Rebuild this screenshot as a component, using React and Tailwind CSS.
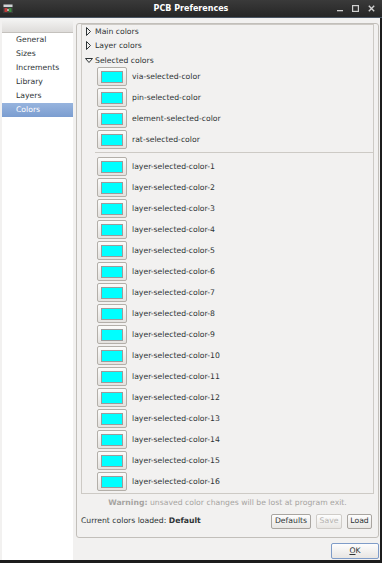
import React from "react";

const selected = [
  "via-selected-color",
  "pin-selected-color",
  "element-selected-color",
  "rat-selected-color",
];
const layers = Array.from({ length: 16 }, (_, i) => `layer-selected-color-${i + 1}`);

function Swatch({ label }) {
  return (
    <div className="h-[21px] flex items-center shrink-0">
      <div className="ml-[15px] w-[30px] h-[19px] rounded-[2px] border border-[#b3afa9] bg-gradient-to-b from-[#fbfbfa] to-[#e4e2df] flex items-center justify-center">
        <div className="w-[22px] h-[12px] border border-[#9b9b9b] bg-[#00ffff]" />
      </div>
      <span className="ml-[5px]">{label}</span>
    </div>
  );
}

function Tri({ open }) {
  return open ? (
    <svg width="8" height="7" viewBox="0 0 8 7" className="shrink-0">
      <path d="M0.5 1.5 L7.5 1.5 L4 5.5 Z" fill="none" stroke="#2e3436" strokeWidth="1" />
    </svg>
  ) : (
    <svg width="7" height="9" viewBox="0 0 7 9" className="shrink-0">
      <path d="M1.5 0.5 L5.5 4.5 L1.5 8.5 Z" fill="none" stroke="#2e3436" strokeWidth="1" />
    </svg>
  );
}

function Header({ label, open, h }) {
  return (
    <div className={`flex items-center shrink-0 ${h}`}>
      <div className="w-[13px] pl-[3px] flex items-center">
        <Tri open={open} />
      </div>
      <span>{label}</span>
    </div>
  );
}

function Btn({ children, disabled, className = "" }) {
  return (
    <div
      className={`h-[15px] px-[3px] flex items-center justify-center rounded-[2px] border bg-gradient-to-b from-[#fdfdfd] to-[#e8e6e3] ${
        disabled ? "border-[#cfccc8] text-[#b5b3b0]" : "border-[#a9a5a0] text-[#2e3436]"
      } ${className}`}
    >
      {children}
    </div>
  );
}

export default function App() {
  const nav = ["General", "Sizes", "Increments", "Library", "Layers", "Colors"];
  return (
    <div
      className="w-[382px] h-[563px] flex flex-col bg-[#1c1c1c] text-[7.7px] text-[#2e3436] leading-none overflow-hidden"
      style={{ fontFamily: '"DejaVu Sans", sans-serif' }}
    >
      {/* Title bar */}
      <div className="h-[18px] shrink-0 flex items-center bg-gradient-to-b from-[#3a3a3a] to-[#262626] border-b border-[#4a5664] relative">
        <div className="pl-[3px] flex items-center">
          <svg width="10" height="9" viewBox="0 0 10 9">
            <rect x="0" y="0" width="10" height="9" fill="#3c3c3c" />
            <rect x="0.5" y="0.5" width="9" height="2.5" fill="#cfd3d6" />
            <rect x="1.5" y="4" width="3" height="4" fill="#c23b3b" />
            <rect x="5.5" y="4" width="3" height="4" fill="#3a8a3e" />
            <rect x="4.3" y="5" width="1.4" height="2" fill="#d8d8d8" />
          </svg>
        </div>
        <div className="absolute inset-0 flex items-center justify-center text-white font-bold text-[8px]">
          PCB Preferences
        </div>
        <div className="ml-auto flex items-center gap-[9px] pr-[7px] text-[#d4d4d4]">
          <svg width="6" height="7" viewBox="0 0 6 7">
            <rect x="0" y="5" width="6" height="1.3" fill="#d0d0d0" />
          </svg>
          <svg width="7" height="7" viewBox="0 0 7 7">
            <rect x="0.6" y="0.6" width="5.8" height="5.8" fill="none" stroke="#d0d0d0" strokeWidth="1.2" />
          </svg>
          <svg width="7" height="7" viewBox="0 0 7 7">
            <path d="M0.8 0.8 L6.2 6.2 M6.2 0.8 L0.8 6.2" stroke="#d0d0d0" strokeWidth="1.4" />
          </svg>
        </div>
      </div>

      {/* Body */}
      <div className="flex-1 flex bg-[#f2f1f0] mr-[2px] mb-[3px] pl-[2px] pt-[2px]">
        {/* Left list */}
        <div className="w-[71px] bg-white flex flex-col shrink-0">
          <div className="h-[13px] bg-gradient-to-b from-[#f2f2f1] to-[#dedcda] border-b border-[#c4c1bd]" />
          {nav.map((n) => (
            <div
              key={n}
              className={`h-[14px] flex items-center pl-[14px] ${
                n === "Colors" ? "bg-gradient-to-b from-[#97b4de] to-[#7b9dd0] text-white" : ""
              }`}
            >
              {n}
            </div>
          ))}
        </div>

        {/* Right column */}
        <div className="ml-[3px] w-[303px] flex flex-col pt-[3px]">
          <div className="h-[515px] border border-[#c2bfba] rounded-[3px] px-[4px] flex flex-col">
            <div className="h-[470px] border border-[#cdcac5] flex flex-col overflow-hidden">
              <Header label="Main colors" h="h-[13px]" />
              <Header label="Layer colors" h="h-[15px]" />
              <Header label="Selected colors" open h="h-[15px]" />
              <div className="-mt-[2px] flex flex-col">
                {selected.map((s) => (
                  <Swatch key={s} label={s} />
                ))}
                <div className="h-[6px] pt-[2px] pl-[13px] shrink-0">
                  <div className="h-px bg-[#cdcac5]" />
                </div>
                {layers.map((s) => (
                  <Swatch key={s} label={s} />
                ))}
              </div>
            </div>
            <div className="h-[17px] flex items-center justify-center text-[#a6a4a1]">
              <span className="font-bold">Warning:</span>
              <span>&nbsp;unsaved color changes will be lost at program exit.</span>
            </div>
            <div className="h-[20px] flex items-center pl-[0px] pr-[2px]">
              <span>Current colors loaded:&nbsp;</span>
              <span className="font-bold">Default</span>
              <div className="ml-auto flex items-center gap-[5px]">
                <Btn className="w-[40px]">Defaults</Btn>
                <Btn disabled className="w-[26px]">Save</Btn>
                <Btn className="w-[25px]">Load</Btn>
              </div>
            </div>
          </div>
          <div className="mt-[5px] flex justify-end">
            <div className="w-[48px] h-[16px] rounded-[2px] border border-[#7f9cc8] bg-gradient-to-b from-[#fdfdfd] to-[#e8e6e3] flex items-center justify-center">
              <span>
                <span className="underline">O</span>K
              </span>
            </div>
          </div>
        </div>
      </div>
    </div>
  );
}
